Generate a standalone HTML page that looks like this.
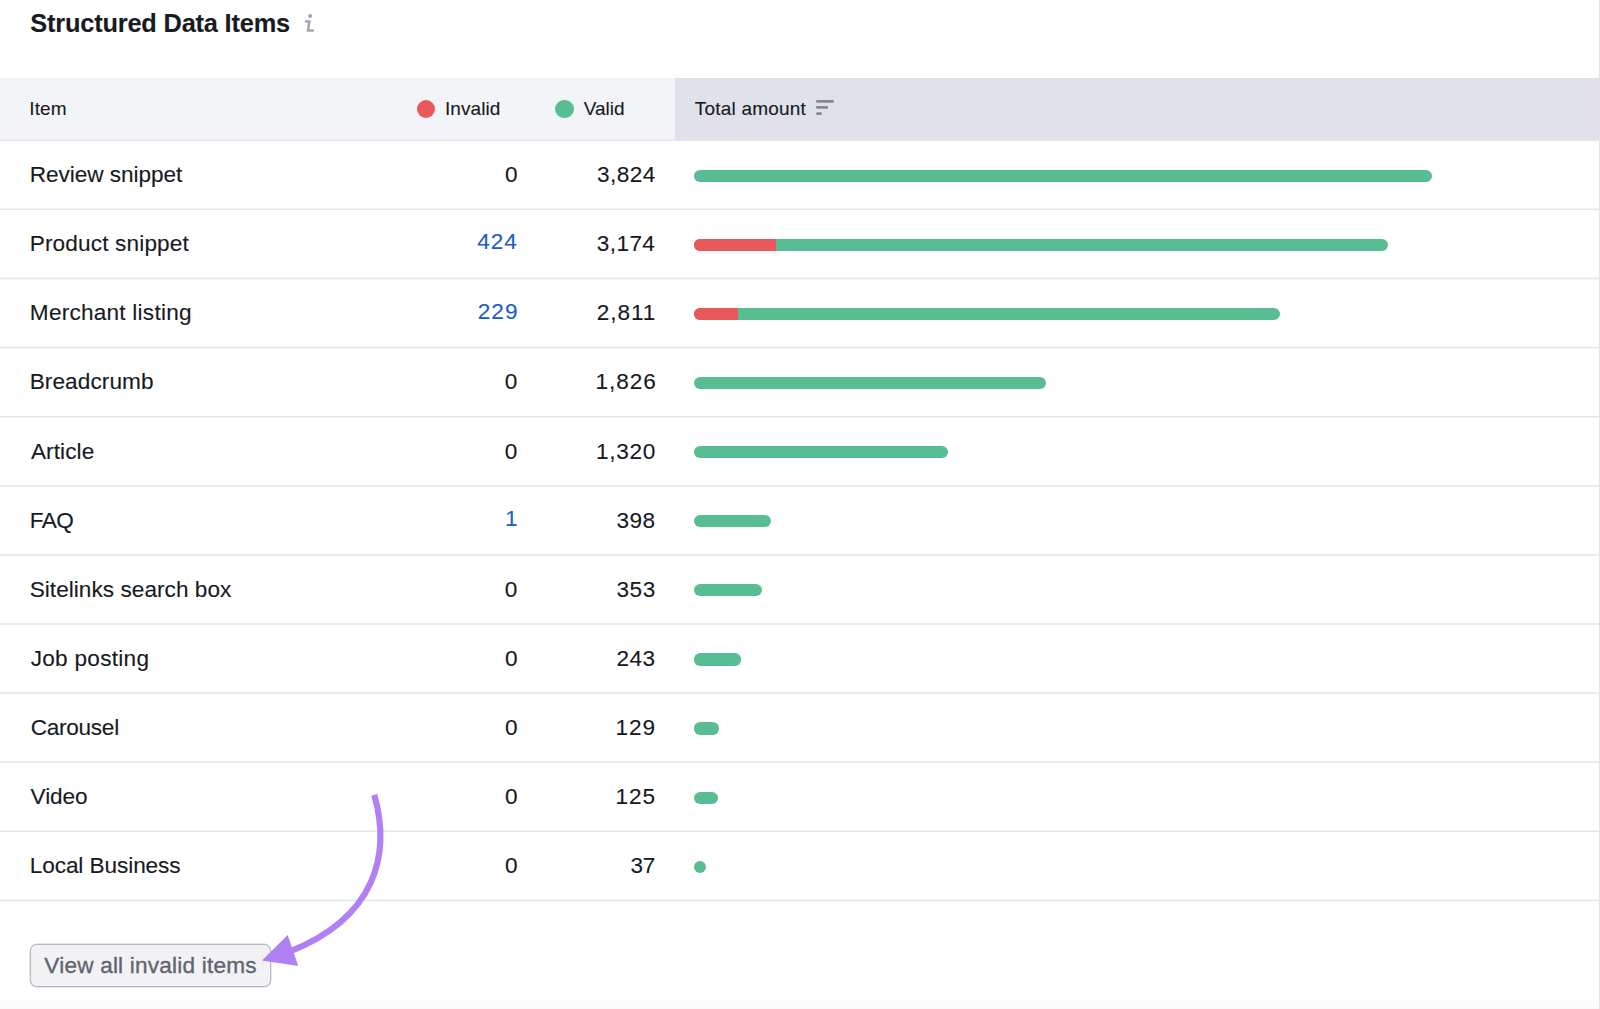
<!DOCTYPE html>
<html><head><meta charset="utf-8"><title>Structured Data Items</title>
<style>
html,body{margin:0;padding:0;}
body{width:1600px;height:1009px;overflow:hidden;position:relative;background:#fff;font-family:"Liberation Sans",sans-serif;color:#171a22;}
.a{position:absolute;white-space:nowrap;}
.t{position:absolute;white-space:nowrap;line-height:40px;height:40px;-webkit-text-stroke:0.12px currentColor;}
.bar{position:absolute;height:12.2px;border-radius:6.1px;overflow:hidden;background:#59bd93;}
.bar i{position:absolute;left:0;top:0;bottom:0;background:#e9585b;}
</style></head><body>

<div class="a" style="left:0;top:78px;width:675px;height:62px;background:#f3f4f8"></div>
<div class="a" style="left:675px;top:78px;width:924px;height:62px;background:#e0e1e9"></div>
<svg class="a" style="left:0;top:0" width="1599" height="1009" viewBox="0 0 1599 1009"><rect x="0" y="139.55" width="1599" height="1.5" fill="#e4e4eb"/><rect x="0" y="208.65" width="1599" height="1.5" fill="#e4e4eb"/><rect x="0" y="277.75" width="1599" height="1.5" fill="#e4e4eb"/><rect x="0" y="346.85" width="1599" height="1.5" fill="#e4e4eb"/><rect x="0" y="415.95" width="1599" height="1.5" fill="#e4e4eb"/><rect x="0" y="485.05" width="1599" height="1.5" fill="#e4e4eb"/><rect x="0" y="554.15" width="1599" height="1.5" fill="#e4e4eb"/><rect x="0" y="623.25" width="1599" height="1.5" fill="#e4e4eb"/><rect x="0" y="692.35" width="1599" height="1.5" fill="#e4e4eb"/><rect x="0" y="761.45" width="1599" height="1.5" fill="#e4e4eb"/><rect x="0" y="830.55" width="1599" height="1.5" fill="#e4e4eb"/><rect x="0" y="899.65" width="1599" height="1.5" fill="#e4e4eb"/></svg>
<div class="t" style="left:30.30px;top:2.60px;font-size:25.4px;font-weight:bold;letter-spacing:-0.20px;color:#191b23;">Structured Data Items</div>
<div class="t" style="left:29.30px;top:89.42px;font-size:19.0px;letter-spacing:0.10px;">Item</div>
<div class="t" style="left:444.95px;top:89.32px;font-size:19.0px;letter-spacing:0.08px;">Invalid</div>
<div class="t" style="left:583.65px;top:89.32px;font-size:19.0px;">Valid</div>
<div class="t" style="left:694.70px;top:89.42px;font-size:19.0px;letter-spacing:0.22px;">Total amount</div>
<svg class="a" style="left:300px;top:10px" width="20" height="26" viewBox="300 10 20 26">
<circle cx="310.15" cy="15.95" r="2.05" fill="#a2a5b5"/>
<path d="M306.1 21.4 H309.3 L308.0 30.6 H312.8" stroke="#a2a5b5" stroke-width="2.5" fill="none" stroke-linecap="round" stroke-linejoin="miter"/>
</svg>
<div class="a" style="left:417px;top:99.8px;width:18.4px;height:18.4px;border-radius:50%;background:#e9585b"></div>
<div class="a" style="left:555.3px;top:99.8px;width:18.4px;height:18.4px;border-radius:50%;background:#59bd93"></div>
<svg class="a" style="left:812px;top:96px" width="26" height="24" viewBox="812 96 26 24">
<path d="M817.4 101.4 H832.6 M817.4 107.4 H826.8 M817.4 113.6 H820.6" stroke="#858692" stroke-width="2.7" stroke-linecap="round" fill="none"/>
</svg>
<div class="t" style="left:29.80px;top:155.07px;font-size:22.6px;letter-spacing:-0.05px;">Review snippet</div>
<div class="t" style="left:504.95px;top:155.07px;font-size:22.6px;">0</div>
<div class="t" style="left:597.10px;top:155.07px;font-size:22.6px;letter-spacing:0.40px;">3,824</div>
<div class="bar" style="left:693.8px;top:169.65px;width:737.9px"></div>
<div class="t" style="left:29.72px;top:224.19px;font-size:22.6px;letter-spacing:0.15px;">Product snippet</div>
<div class="t" style="left:477.35px;top:222.39px;font-size:22.6px;letter-spacing:0.88px;color:#1b5dc5;">424</div>
<div class="t" style="left:596.80px;top:224.19px;font-size:22.6px;letter-spacing:0.40px;">3,174</div>
<div class="bar" style="left:693.8px;top:238.75px;width:694.3px"><i style="width:81.8px"></i></div>
<div class="t" style="left:29.85px;top:293.31px;font-size:22.6px;letter-spacing:0.23px;">Merchant listing</div>
<div class="t" style="left:477.75px;top:291.51px;font-size:22.6px;letter-spacing:1.03px;color:#1b5dc5;">229</div>
<div class="t" style="left:596.80px;top:293.31px;font-size:22.6px;letter-spacing:0.93px;">2,811</div>
<div class="bar" style="left:693.8px;top:307.85px;width:586.6px"><i style="width:44.2px"></i></div>
<div class="t" style="left:29.65px;top:362.43px;font-size:22.6px;letter-spacing:0.09px;">Breadcrumb</div>
<div class="t" style="left:504.85px;top:362.43px;font-size:22.6px;">0</div>
<div class="t" style="left:595.45px;top:362.43px;font-size:22.6px;letter-spacing:0.96px;">1,826</div>
<div class="bar" style="left:693.8px;top:376.95px;width:352.4px"></div>
<div class="t" style="left:30.90px;top:431.55px;font-size:22.6px;letter-spacing:0.10px;">Article</div>
<div class="t" style="left:504.85px;top:431.55px;font-size:22.6px;">0</div>
<div class="t" style="left:596.00px;top:431.55px;font-size:22.6px;letter-spacing:0.72px;">1,320</div>
<div class="bar" style="left:693.8px;top:446.05px;width:254.7px"></div>
<div class="t" style="left:29.65px;top:500.67px;font-size:22.6px;letter-spacing:-0.50px;">FAQ</div>
<div class="t" style="left:504.95px;top:498.87px;font-size:22.6px;color:#1b5dc5;">1</div>
<div class="t" style="left:616.40px;top:500.67px;font-size:22.6px;letter-spacing:0.50px;">398</div>
<div class="bar" style="left:693.8px;top:515.15px;width:77.0px"></div>
<div class="t" style="left:29.65px;top:569.79px;font-size:22.6px;letter-spacing:0.04px;">Sitelinks search box</div>
<div class="t" style="left:504.85px;top:569.79px;font-size:22.6px;">0</div>
<div class="t" style="left:616.40px;top:569.79px;font-size:22.6px;letter-spacing:0.60px;">353</div>
<div class="bar" style="left:693.8px;top:584.25px;width:68.1px"></div>
<div class="t" style="left:30.65px;top:638.91px;font-size:22.6px;letter-spacing:0.28px;">Job posting</div>
<div class="t" style="left:504.95px;top:638.91px;font-size:22.6px;">0</div>
<div class="t" style="left:616.45px;top:638.91px;font-size:22.6px;letter-spacing:0.52px;">243</div>
<div class="bar" style="left:693.8px;top:653.35px;width:46.9px"></div>
<div class="t" style="left:30.72px;top:708.03px;font-size:22.6px;letter-spacing:-0.28px;">Carousel</div>
<div class="t" style="left:504.95px;top:708.03px;font-size:22.6px;">0</div>
<div class="t" style="left:615.45px;top:708.03px;font-size:22.6px;letter-spacing:1.02px;">129</div>
<div class="bar" style="left:693.8px;top:722.45px;width:24.9px"></div>
<div class="t" style="left:30.60px;top:777.15px;font-size:22.6px;letter-spacing:-0.08px;">Video</div>
<div class="t" style="left:504.95px;top:777.15px;font-size:22.6px;">0</div>
<div class="t" style="left:615.45px;top:777.15px;font-size:22.6px;letter-spacing:1.02px;">125</div>
<div class="bar" style="left:693.8px;top:791.55px;width:24.1px"></div>
<div class="t" style="left:29.70px;top:846.27px;font-size:22.6px;letter-spacing:-0.08px;">Local Business</div>
<div class="t" style="left:504.95px;top:846.27px;font-size:22.6px;">0</div>
<div class="t" style="left:630.50px;top:846.27px;font-size:22.6px;letter-spacing:-0.40px;">37</div>
<div class="bar" style="left:693.8px;top:860.65px;width:12.2px"></div>
<div class="a" style="left:0;top:988px;width:1599px;height:21px;background:linear-gradient(to bottom,rgba(0,0,0,0),rgba(0,0,0,0.02))"></div>
<div class="a" style="left:1599px;top:0;width:1px;height:1009px;background:#e3e3e8"></div>
<div class="a" style="left:30px;top:944px;width:239px;height:41px;border:1px solid #b8b9c3;box-shadow:0 0 0 0.4px #c8c9d2;border-radius:7px;background:#f2f2f5"></div>
<div class="t" style="left:44.30px;top:945.77px;font-size:22.6px;letter-spacing:0.20px;color:#616472;-webkit-text-stroke:0.35px currentColor;">View all invalid items</div>
<svg class="a" style="left:0;top:0" width="1600" height="1009" viewBox="0 0 1600 1009">
<path d="M374.3 794.8 C390.65 852.67 377.47 917.14 289 951.8" stroke="#b080f4" stroke-width="6.2" fill="none" stroke-linecap="butt"/>
<path d="M261.9 960.6 L287.7 934.9 L298.2 966.1 Z" fill="#b080f4"/>
</svg>
</body></html>
